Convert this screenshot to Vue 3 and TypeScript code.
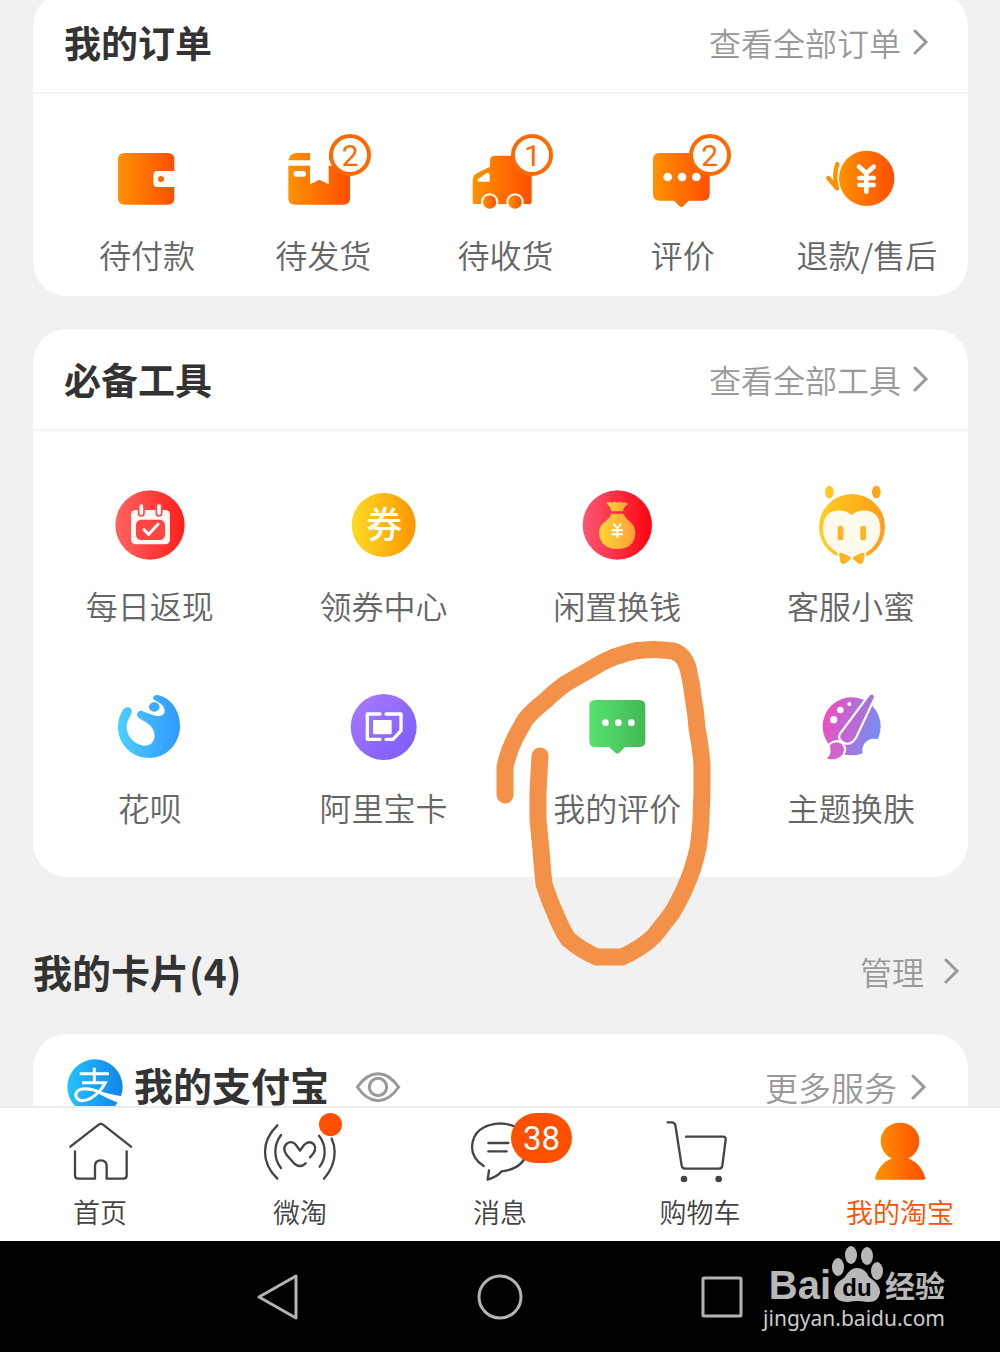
<script setup lang="ts">
interface Entry {
  label: string
  viewBox: string
  art: string
  badge?: string
  dot?: boolean
  active?: boolean
}

const ink = 'fill="none" stroke="#444" stroke-width="7" stroke-linecap="round" stroke-linejoin="round"'

const orders: Entry[] = [
  {
    label: '待付款',
    viewBox: '39 30 264 252',
    art: '<path fill="url(#g-orange)" d="M104 99H233Q253 99 253 119V153H202Q190 153 190 165V189Q190 201 202 201H253V234Q253 254 233 254H104Q84 254 84 234V119Q84 99 104 99Z"/><circle cx="213" cy="177" r="9" fill="#ff6a00"/>',
  },
  {
    label: '待发货',
    viewBox: '567 30 264 252',
    badge: '2',
    art: '<path fill="url(#g-orange)" d="M595 121Q600 99 620 99H660V121ZM717 99H755Q777 99 780 121H717ZM595 137H660V193L688 179L716 193V137H780V234Q780 254 760 254H615Q595 254 595 234Z"/><rect x="611" y="153" width="37" height="17" rx="8" fill="#fff"/>',
  },
  {
    label: '待收货',
    viewBox: '33 30 264 252',
    badge: '1',
    art: '<path fill="url(#g-orange)" d="M68 182Q68 165 82 159L120 140V122Q120 107 135 107H245V246Q245 252 239 252H74Q68 252 68 246Z"/><path fill="#fff" d="M84 178L108 160Q118 155 119 164V185H88Q80 185 84 178Z"/><g fill="#fff"><circle cx="119" cy="246" r="26"/><circle cx="195" cy="246" r="26"/></g><g fill="url(#g-orange)"><circle cx="119" cy="246" r="20"/><circle cx="195" cy="246" r="20"/></g>',
  },
  {
    label: '评价',
    viewBox: '564 30 264 252',
    badge: '2',
    art: '<path fill="url(#g-orange)" d="M626 99H756Q776 99 776 119V222Q776 242 756 242H713L696 259Q691 264 686 259L669 242H626Q606 242 606 222V119Q606 99 626 99Z"/><g fill="#fff"><circle cx="650" cy="171" r="13"/><circle cx="693" cy="171" r="13"/><circle cx="736" cy="171" r="13"/></g>',
  },
  {
    label: '退款/售后',
    viewBox: '1116 30 264 252',
    art: '<circle cx="1247" cy="175" r="83" fill="url(#g-orange)"/><path fill="none" stroke="#fff" stroke-width="14" stroke-linecap="round" d="M1224 140L1246 160L1268 140M1225 174H1268M1225 195H1268M1246 160V215"/><path fill="none" stroke="#ff9000" stroke-width="13" stroke-linecap="round" stroke-linejoin="round" d="M1159 132Q1147 165 1158 205L1132 174"/>',
  },
]

const tools: Entry[] = [
  {
    label: '每日返现',
    viewBox: '42 30 270 270',
    art: '<circle cx="177" cy="165" r="104" fill="url(#g-red)"/><rect x="120" y="120" width="117" height="103" rx="14" fill="#fff5f3"/><rect x="135" y="149" width="87" height="61" rx="16" fill="#ff4441"/><path d="M159 179L173 193L201 163" fill="none" stroke="#fff" stroke-width="9" stroke-linecap="round"/><g fill="#fff" stroke="#ff4b49" stroke-width="5"><rect x="143" y="100" width="16" height="38" rx="8"/><rect x="196" y="100" width="16" height="38" rx="8"/></g>',
  },
  {
    label: '领券中心',
    viewBox: '746 30 270 270',
    art: '<circle cx="880" cy="165" r="96" fill="url(#g-yellow)"/><text x="882" y="205" font-size="108" font-weight="500" fill="#fff" text-anchor="middle">券</text>',
  },
  {
    label: '闲置换钱',
    viewBox: '37 30 270 270',
    art: '<circle cx="173" cy="165" r="104" fill="url(#g-rose)"/><path fill="url(#g-gold)" d="M156 131H190Q200 147 216 160Q228 174 227 192Q222 237 173 237Q124 237 118 192Q117 174 130 160Q148 147 156 131Z"/><path fill="url(#g-gold)" d="M140 99Q150 93 156 99Q164 92 173 98Q182 92 189 99Q197 93 205 101Q192 110 190 124H156Q152 110 140 99Z"/><path fill="none" stroke="#fff" stroke-width="6" d="M161 161L173 175L185 161M156 181H190M156 193H190M173 175V204"/>',
  },
  {
    label: '客服小蜜',
    viewBox: '738 30 270 270',
    art: '<ellipse cx="808" cy="66" rx="13" ry="19" fill="#ffc81f"/><ellipse cx="949" cy="66" rx="13" ry="19" fill="#ffa51c"/><circle cx="876" cy="171" r="99" fill="url(#g-bee)"/><path fill="#fff" d="M832 246H919V280H832Z"/><path fill="#fdf9ed" d="M875 135C895 117 915 121 930 124C953 132 961 150 961 180C960 212 940 236 917 248V256H834V248C808 235 790 210 789 180C789 150 798 130 820 124C838 120 855 118 875 135Z"/><g fill="#ffb41f"><rect x="833" y="167" width="17" height="44" rx="8"/><rect x="901" y="167" width="17" height="44" rx="8"/><path d="M838 257Q836 246 846 249L868 259Q877 264 869 270L854 281Q844 284 841 275ZM913 257Q915 246 905 249L883 259Q874 264 882 270L897 281Q907 284 910 275Z"/></g>',
  },
  {
    label: '花呗',
    viewBox: '45 6 270 270',
    art: '<path fill="url(#g-blue)" d="M125 96C127 80 108 78 100 88C90 103 84 120 84 141C84 195 128 234 178 234C230 234 270 190 270 138C270 95 245 55 205 46C192 42 184 55 193 60C205 68 222 72 224 92C224 106 210 111 195 107C180 102 168 98 157 93C145 90 137 103 143 110C152 122 195 130 194 170C192 188 178 198 162 197C135 195 110 170 110 141C110 120 122 112 125 96Z"/><ellipse cx="193" cy="81" rx="16" ry="14" fill="#3aacff"/>',
  },
  {
    label: '阿里宝卡',
    viewBox: '746 6 270 270',
    art: '<circle cx="880" cy="141" r="99" fill="url(#g-violet)"/><g fill="none" stroke="#fff" stroke-width="10" stroke-linecap="round" stroke-linejoin="round"><path d="M869 102H831V178H869M887 102H932V152L908 178H887"/></g><rect x="848" y="120" width="56" height="43" rx="4" fill="#fff"/>',
  },
  {
    label: '我的评价',
    viewBox: '277 156 270 270',
    art: '<path fill="url(#g-green)" d="M347 210H479Q497 210 497 228V333Q497 351 479 351H436L419 368Q413 373 407 368L388 351H347Q329 351 329 333V228Q329 210 347 210Z"/><g fill="#fff"><circle cx="377" cy="278" r="10"/><circle cx="416" cy="278" r="10"/><circle cx="455" cy="278" r="10"/></g>',
  },
  {
    label: '主题换肤',
    viewBox: '978 156 270 270',
    art: '<circle cx="1115" cy="289" r="87" fill="url(#g-pink)"/><g fill="#fff"><circle cx="1182" cy="361" r="35"/><circle cx="1061" cy="269" r="11"/><circle cx="1081" cy="240" r="10"/><circle cx="1108" cy="222" r="6"/></g><g fill="#fff" stroke="#fff" stroke-width="13"><path d="M1170 196Q1180 189 1182 201L1125 322Q1112 342 1096 337Q1076 328 1082 314Z"/><path d="M1049 346Q1068 330 1085 342Q1098 356 1087 374Q1070 392 1043 387Q1040 382 1047 379Q1055 370 1049 346Z"/></g><path fill="url(#g-brush)" d="M1170 196Q1180 189 1182 201L1125 322Q1112 342 1096 337Q1076 328 1082 314Z"/><path fill="#d263cd" d="M1049 346Q1068 330 1085 342Q1098 356 1087 374Q1070 392 1043 387Q1040 382 1047 379Q1055 370 1049 346Z"/>',
  },
]

const tabs: Entry[] = [
  {
    label: '首页',
    viewBox: '168 54 264 198',
    art: `<path ${ink} d="M211 140L296 74Q302 69 309 74L393 140M225 154V226Q225 236 235 236H285V198Q285 181 302 181Q320 181 320 198V236H370Q380 236 380 226V154"/>`,
  },
  {
    label: '微淘',
    viewBox: '768 54 264 198',
    dot: true,
    art: `<path ${ink} d="M832 76Q795 112 795 156Q795 200 832 236M843 105Q826 128 826 156Q826 182 843 204M957 107Q974 128 974 156Q974 180 959 200M995 116Q1004 135 1004 156Q1004 200 972 236M917 190Q900 206 882 190L860 165Q846 145 860 131Q876 120 888 135L900 152L912 135Q928 120 942 133Q953 150 930 172"/>`,
  },
  {
    label: '消息',
    viewBox: '1368 54 264 198',
    badge: '38',
    art: `<path ${ink} d="M1451 198Q1416 175 1416 140Q1420 75 1500 70Q1580 75 1583 140Q1580 205 1505 214Q1490 232 1463 239L1467 211M1465 129H1525M1465 154H1520"/>`,
  },
  {
    label: '购物车',
    viewBox: '468 234 264 198',
    art: `<path ${ink} d="M503 247H515Q524 247 526 255L545 377Q547 386 556 386H657Q665 386 667 377L677 299Q678 290 669 290H558"/><g fill="#444"><circle cx="552" cy="417" r="10"/><circle cx="656" cy="417" r="10"/></g>`,
  },
  {
    label: '我的淘宝',
    viewBox: '1068 234 264 198',
    active: true,
    art: '<path fill="url(#g-orange)" d="M1200 248A56 56 0 0 1 1225 355Q1265 372 1276 415Q1276 419 1272 419H1129Q1125 419 1125 415Q1136 372 1175 355A56 56 0 0 1 1200 248Z"/>',
  },
]
</script>

<template>
  <div class="screen">
    <svg class="defs" width="0" height="0" aria-hidden="true">
      <defs>
        <linearGradient id="g-orange"><stop offset="0" stop-color="#ff9200" /><stop offset="1" stop-color="#ff4e00" /></linearGradient>
        <linearGradient id="g-red"><stop offset="0" stop-color="#ff6462" /><stop offset="1" stop-color="#ff1f1c" /></linearGradient>
        <linearGradient id="g-yellow"><stop offset="0" stop-color="#fbdb26" /><stop offset="1" stop-color="#ff9500" /></linearGradient>
        <linearGradient id="g-rose"><stop offset="0" stop-color="#fb5675" /><stop offset="1" stop-color="#ff040e" /></linearGradient>
        <linearGradient id="g-gold"><stop offset="0" stop-color="#ffd835" /><stop offset="1" stop-color="#ff9d3a" /></linearGradient>
        <linearGradient id="g-bee"><stop offset="0" stop-color="#ffcf20" /><stop offset="1" stop-color="#ff9c1a" /></linearGradient>
        <linearGradient id="g-blue"><stop offset="0" stop-color="#4ccfff" /><stop offset="1" stop-color="#2f98ff" /></linearGradient>
        <linearGradient id="g-violet" x2="1" y2="1"><stop offset="0" stop-color="#ad7cff" /><stop offset="1" stop-color="#765aff" /></linearGradient>
        <linearGradient id="g-green"><stop offset="0" stop-color="#56e26c" /><stop offset="1" stop-color="#42b957" /></linearGradient>
        <linearGradient id="g-pink" y2="0.3"><stop offset="0" stop-color="#ff45b6" /><stop offset="1" stop-color="#7b8cf2" /></linearGradient>
        <linearGradient id="g-brush"><stop offset="0" stop-color="#c864d0" /><stop offset="1" stop-color="#a173de" /></linearGradient>
        <linearGradient id="g-alipay"><stop offset="0" stop-color="#22c3fa" /><stop offset="1" stop-color="#1284e8" /></linearGradient>
      </defs>
    </svg>

    <main class="content">
      <section class="card">
        <header class="card-head">
          <h2>我的订单</h2>
          <a class="more" href="#orders">查看全部订单<svg class="chevron" viewBox="0 0 16 28"><path d="M2 3L13 14L2 25" /></svg></a>
        </header>
        <nav class="orders">
          <a v-for="item in orders" :key="item.label" class="entry" href="#order">
            <span class="art">
              <svg class="order-icon" :viewBox="item.viewBox" v-html="item.art"></svg>
              <span v-if="item.badge" class="ring">{{ item.badge }}</span>
            </span>
            <span>{{ item.label }}</span>
          </a>
        </nav>
      </section>

      <section class="card tools-card">
        <header class="card-head">
          <h2>必备工具</h2>
          <a class="more" href="#tools">查看全部工具<svg class="chevron" viewBox="0 0 16 28"><path d="M2 3L13 14L2 25" /></svg></a>
        </header>
        <nav class="tools">
          <a v-for="item in tools" :key="item.label" class="entry" href="#tool">
            <svg class="tool-icon" :viewBox="item.viewBox" v-html="item.art"></svg>
            <span>{{ item.label }}</span>
          </a>
        </nav>
        <svg class="scribble" viewBox="490 636 226 336" aria-hidden="true">
          <path d="M505 795V767Q508 752 516 736L525 720Q532 711 545 701Q553 693 565 684L603 662Q615 656 627 653Q636 650 644 650Q654 649 663 650L673 651Q680 653 684 659Q688 665 689 673Q692 685 693 697Q696 712 697 728Q701 750 702 765V790L701 820Q700 836 698 848Q694 868 685 888Q678 903 672 913L654 936Q642 948 622 957H597Q582 951 568 939Q561 928 555 913Q549 900 544 884Q542 865 541 850L538 820V792L540 756" />
        </svg>
      </section>

      <header class="section-head">
        <h2>我的卡片(4)</h2>
        <a class="more manage" href="#cards">管理<svg class="chevron" viewBox="0 0 16 28"><path d="M2 3L13 14L2 25" /></svg></a>
      </header>

      <section class="card alipay">
        <svg class="alipay-logo" viewBox="199 388 168 168" aria-hidden="true">
          <circle cx="283" cy="472" r="83" fill="url(#g-alipay)" />
          <path fill="none" stroke="#fff" stroke-width="9" d="M237 432H325M281 414V459M244 459H314Q300 488 270 506Q235 522 226 501Q222 478 254 477Q275 478 300 488" />
          <path fill="#fff" d="M280 478Q320 494 364 500L358 522Q320 507 284 487Z" />
        </svg>
        <h3>我的支付宝</h3>
        <button class="eye" type="button" aria-label="显示">
          <svg viewBox="1065 419 138 102"><path d="M1072 470Q1100 430 1134 430Q1168 430 1196 470Q1168 511 1134 511Q1100 511 1072 470Z" /><circle cx="1134" cy="470" r="26" /></svg>
        </button>
        <a class="more services" href="#services">更多服务<svg class="chevron" viewBox="0 0 16 28"><path d="M2 3L13 14L2 25" /></svg></a>
      </section>
    </main>

    <nav class="tabbar">
      <a v-for="tab in tabs" :key="tab.label" class="tab" :class="{ active: tab.active }" href="#tab">
        <span class="art">
          <svg class="tab-icon" :viewBox="tab.viewBox" v-html="tab.art"></svg>
          <span v-if="tab.dot" class="dot"></span>
          <span v-if="tab.badge" class="count">{{ tab.badge }}</span>
        </span>
        <span>{{ tab.label }}</span>
      </a>
    </nav>

    <footer class="system">
      <div class="keys">
        <button type="button" aria-label="返回"><svg viewBox="0 0 60 60"><path d="M48 9V51L11 30Z" /></svg></button>
        <button type="button" aria-label="主屏幕"><svg viewBox="0 0 60 60"><circle cx="30" cy="30" r="21" /></svg></button>
        <button type="button" aria-label="最近任务"><svg viewBox="0 0 60 60"><rect x="11" y="11" width="38" height="38" rx="1" /></svg></button>
      </div>
      <div class="watermark">
        <div class="brand">
          <span class="bai">Bai</span>
          <svg class="paw" viewBox="828 1245 54 58">
            <g fill="#b8b8b8">
              <ellipse cx="848" cy="1255" rx="6" ry="9" /><ellipse cx="864" cy="1256" rx="6" ry="9" />
              <ellipse cx="835" cy="1267" rx="6" ry="9" /><ellipse cx="874" cy="1271" rx="6" ry="9" />
              <path d="M854 1268Q862 1268 866 1277Q878 1285 877 1293Q875 1303 864 1302Q854 1300 845 1302Q831 1302 831 1291Q832 1283 841 1278Q847 1268 854 1268Z" />
            </g>
            <text x="854" y="1296" text-anchor="middle">du</text>
          </svg>
          <span class="jingyan">经验</span>
        </div>
        <div class="site">jingyan.baidu.com</div>
      </div>
    </footer>
  </div>
</template>

<style>
body {
  background: #f1f1f1;
}
</style>

<style scoped>
.screen {
  display: flex;
  flex-direction: column;
  height: 100vh;
  overflow: hidden;
  background: #f1f1f1;
  color: #666;
  font-family: "Noto Sans CJK SC", sans-serif;
  font-size: 32px;
  font-weight: 350;
  line-height: 40px;
}
.defs {
  position: absolute;
}
a {
  color: inherit;
  text-decoration: none;
}
h2,
h3 {
  margin: 0;
  color: #333;
  font-weight: 700;
}
h2 {
  font-size: 37px;
}
h3 {
  padding-bottom: 6px;
  font-size: 39px;
}
svg {
  display: block;
}
.content {
  flex: 1;
  min-height: 0;
  padding: 0 32px 0 33px;
  margin-top: -8px;
}
.card {
  background: #fff;
  border-radius: 34px;
}
.card-head {
  display: flex;
  align-items: center;
  justify-content: space-between;
  height: 100px;
  padding: 0 39px 0 31px;
  border-bottom: 2px solid #f5f5f2;
}
.more {
  display: flex;
  align-items: center;
  gap: 12px;
  color: #999;
}
.chevron {
  width: 16px;
  height: 28px;
  fill: none;
  stroke: #999;
  stroke-width: 3;
  stroke-linecap: round;
}
.orders {
  display: grid;
  grid-template-columns: 176fr 176fr 188fr 166fr 202fr;
  padding: 36px 0 22px 26px;
}
.entry {
  display: flex;
  flex-direction: column;
  align-items: center;
  white-space: nowrap;
}
.art {
  position: relative;
}
.order-icon {
  width: 88px;
  height: 84px;
  margin-bottom: 20px;
}
.ring {
  position: absolute;
  top: 4px;
  left: 50px;
  box-sizing: border-box;
  width: 42px;
  height: 42px;
  border: 4px solid #ff6a00;
  border-radius: 50%;
  background: #fff;
  color: #ff6a00;
  font: 30px/36px Roboto, sans-serif;
  text-align: center;
}
.tools-card {
  position: relative;
  margin-top: 33px;
}
.tools {
  display: grid;
  grid-template-columns: repeat(4, 1fr);
  row-gap: 57px;
  padding: 49px 0 50px;
}
.tool-icon {
  width: 90px;
  height: 90px;
  margin-bottom: 15px;
}
.scribble {
  position: absolute;
  top: 307px;
  left: 457px;
  width: 226px;
  height: 336px;
  fill: none;
  stroke: #f39149;
  stroke-width: 17;
  stroke-linecap: round;
  stroke-linejoin: round;
  pointer-events: none;
}
.section-head {
  display: flex;
  align-items: center;
  justify-content: space-between;
  padding: 74px 8px 43px 0;
}
.section-head h2 {
  font-size: 39px;
}
.manage {
  gap: 20px;
}
.alipay {
  display: flex;
  align-items: center;
  padding: 25px 41px 60px 34px;
}
.alipay-logo {
  width: 56px;
  height: 56px;
  margin-right: 11px;
}
.eye {
  margin-left: 26px;
  padding: 0;
  border: 0;
  background: none;
}
.eye svg {
  width: 46px;
  height: 34px;
  fill: none;
  stroke: #999;
  stroke-width: 9;
}
.services {
  gap: 14px;
  margin-left: auto;
  font-size: 33px;
}
.tabbar {
  position: relative;
  display: grid;
  grid-template-columns: repeat(5, 1fr);
  padding: 10px 0 13px;
  border-top: 2px solid #ececec;
  background: #fff;
  color: #444;
  font-size: 27px;
  line-height: 32px;
}
.tab {
  display: flex;
  flex-direction: column;
  align-items: center;
}
.active {
  color: #ff5000;
}
.tab-icon {
  width: 88px;
  height: 66px;
  margin-bottom: 12px;
}
.dot {
  position: absolute;
  top: -5px;
  left: 63px;
  width: 23px;
  height: 23px;
  border-radius: 50%;
  background: #ff5000;
}
.count {
  position: absolute;
  top: -5px;
  left: 55px;
  width: 61px;
  height: 50px;
  border-radius: 25px;
  background: #ff5000;
  color: #fff;
  font: 33px/52px Roboto, sans-serif;
  text-align: center;
}
.system {
  position: relative;
  background: #000;
}
.keys {
  display: grid;
  grid-template-columns: repeat(3, 1fr);
  justify-items: center;
  width: 66.6%;
  margin: 0 auto;
  padding: 26px 0 25px;
}
.keys button {
  padding: 0;
  border: 0;
  background: none;
}
.keys svg {
  width: 60px;
  height: 60px;
  fill: none;
  stroke: #b3b3b3;
  stroke-width: 3;
  stroke-linejoin: round;
}
.watermark {
  position: absolute;
  top: 4px;
  right: 55px;
  color: #b8b8b8;
}
.brand {
  display: flex;
  align-items: flex-end;
  justify-content: flex-end;
}
.bai {
  font: 700 40px/36px "Liberation Sans", sans-serif;
}
.paw {
  width: 54px;
  height: 58px;
}
.paw text {
  fill: #000;
  font: 700 24px "Liberation Sans", sans-serif;
}
.jingyan {
  font-size: 30px;
  font-weight: 700;
  line-height: 38px;
}
.site {
  margin-top: 1px;
  color: #ccc;
  font: 21px/28px "Noto Sans", sans-serif;
}
</style>
